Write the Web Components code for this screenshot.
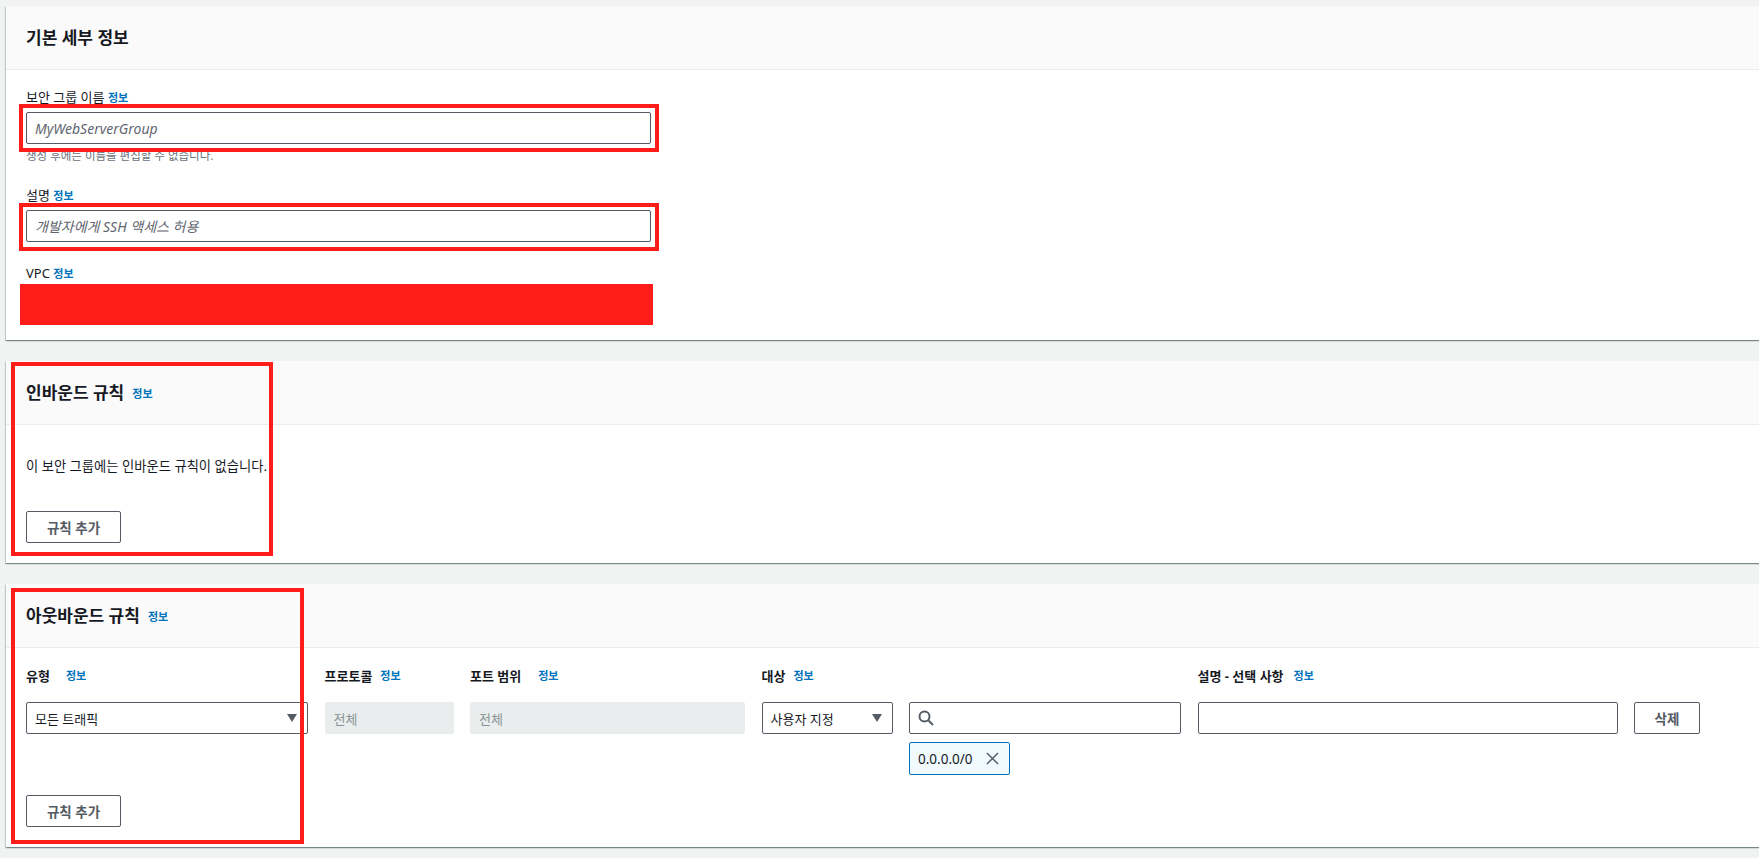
<!DOCTYPE html>
<html lang="ko">
<head>
<meta charset="utf-8">
<title>보안 그룹 생성</title>
<style>
  html, body { margin: 0; height: 100%; overflow: hidden; background: #f1f2f2; }
  body {
    padding: 6px 0 0 6px;
    box-sizing: border-box;
    font-family: "Noto Sans", "Noto Sans CJK KR", sans-serif;
    font-size: 14px;
    color: #16191f;
  }
</style>
</head>
<body>

<aws-panel heading="기본 세부 정보" style="height:334px">
  <div style="padding-top:18px">
    <form-field label="보안 그룹 이름" hint="생성 후에는 이름을 편집할 수 없습니다.">
      <text-input placeholder="MyWebServerGroup"></text-input>
    </form-field>
    <form-field label="설명" style="margin-top:23px">
      <text-input placeholder="개발자에게 SSH 액세스 허용"></text-input>
    </form-field>
    <form-field label="VPC" style="margin-top:22px"></form-field>
  </div>
  <red-mark style="left:13px;top:98px;width:640px;height:48px"></red-mark>
  <red-mark style="left:13px;top:197px;width:640px;height:48px"></red-mark>
  <red-mark solid style="left:14px;top:278px;width:633px;height:41px"></red-mark>
</aws-panel>

<aws-panel heading="인바운드 규칙" info style="height:202px;margin-top:21px">
  <p style="margin:31px 0 0;line-height:20px;font-size:13.3px">이 보안 그룹에는 인바운드 규칙이 없습니다.</p>
  <aws-button style="margin-top:35px;width:95px">규칙 추가</aws-button>
  <red-mark style="left:5px;top:1px;width:262px;height:194px"></red-mark>
</aws-panel>

<aws-panel heading="아웃바운드 규칙" info style="height:263px;margin-top:21px">
  <rule-row style="margin-top:17px"></rule-row>
  <aws-button style="position:absolute;left:20px;top:211px;width:95px">규칙 추가</aws-button>
  <red-mark style="left:5px;top:4px;width:293px;height:256px"></red-mark>
</aws-panel>

<script>
class InfoLink extends HTMLElement {
  constructor() {
    super();
    this.attachShadow({ mode: 'open' });
    this.shadowRoot.innerHTML = `
      <style>
        :host { display: inline-block; font-size: 11px; font-weight: 700; color: #0073bb; }
        :host([hidden]) { display: none; }
      </style>
      <slot>정보</slot>`;
  }
}

class AwsPanel extends HTMLElement {
  constructor() {
    super();
    this.attachShadow({ mode: 'open' });
    this.shadowRoot.innerHTML = `
      <style>
        :host {
          display: block;
          position: relative;
          width: 1800px;
          box-sizing: border-box;
          background: #fff;
          box-shadow: 0 1px 1px 0 rgba(0,28,36,.3), 1px 1px 1px 0 rgba(0,28,36,.15), -1px 1px 1px 0 rgba(0,28,36,.15);
        }
        header {
          height: 64px;
          box-sizing: border-box;
          padding-left: 20px;
          display: flex;
          align-items: center;
          gap: 8px;
          background: #fafafa;
          border-bottom: 1px solid #eaeded;
        }
        h2 { margin: 0; font-size: 17px; font-weight: 700; line-height: 22px; }
        .body { padding-left: 20px; }
      </style>
      <header><h2></h2><info-link hidden></info-link></header>
      <div class="body"><slot></slot></div>`;
  }
  connectedCallback() {
    this.shadowRoot.querySelector('h2').textContent = this.getAttribute('heading');
    this.shadowRoot.querySelector('info-link').hidden = !this.hasAttribute('info');
  }
}

class FormField extends HTMLElement {
  constructor() {
    super();
    this.attachShadow({ mode: 'open' });
    this.shadowRoot.innerHTML = `
      <style>
        :host { display: block; width: 625px; font-size: 13px; }
        .label { height: 18px; line-height: 18px; margin-bottom: 6px; }
        .hint { font-size: 11.5px; line-height: 14px; color: #687078; margin-top: 5px; }
      </style>
      <div class="label"><span id="l"></span> <info-link></info-link></div>
      <slot></slot>
      <div class="hint"></div>`;
  }
  connectedCallback() {
    this.shadowRoot.querySelector('#l').textContent = this.getAttribute('label');
    const hint = this.shadowRoot.querySelector('.hint');
    hint.textContent = this.getAttribute('hint') || '';
    hint.hidden = !this.hasAttribute('hint');
  }
}

class TextInput extends HTMLElement {
  constructor() {
    super();
    this.attachShadow({ mode: 'open' });
    this.shadowRoot.innerHTML = `
      <style>
        :host {
          display: flex;
          align-items: center;
          height: 32px;
          box-sizing: border-box;
          padding: 0 8px;
          background: #fff;
          border: 1px solid #545b64;
          border-radius: 2px;
          font-size: 13px;
          overflow: hidden;
        }
        :host([disabled]) { background: #eaeded; border-color: #eaeded; color: #879596; }
        .ph { font-style: italic; font-size: 14px; color: #5f6670; }
      </style>
      <slot name="icon"></slot><span class="ph"></span><slot></slot>`;
  }
  connectedCallback() {
    this.shadowRoot.querySelector('.ph').textContent = this.getAttribute('placeholder') || '';
  }
}

class SelectBox extends HTMLElement {
  constructor() {
    super();
    this.attachShadow({ mode: 'open' });
    this.shadowRoot.innerHTML = `
      <style>
        :host {
          display: flex;
          align-items: center;
          justify-content: space-between;
          height: 32px;
          box-sizing: border-box;
          padding: 0 10px 0 8px;
          background: #fff;
          border: 1px solid #545b64;
          border-radius: 2px;
          font-size: 13px;
        }
        svg { width: 10px; height: 8px; fill: #545b64; }
      </style>
      <slot></slot>
      <svg viewBox="0 0 10 8"><path d="M0 0h10L5 8z"/></svg>`;
  }
}

class AwsButton extends HTMLElement {
  constructor() {
    super();
    this.attachShadow({ mode: 'open' });
    this.shadowRoot.innerHTML = `
      <style>
        :host {
          display: flex;
          align-items: center;
          justify-content: center;
          height: 32px;
          box-sizing: border-box;
          background: #fff;
          border: 1px solid #545b64;
          border-radius: 2px;
          color: #545b64;
          font-size: 13.5px;
          font-weight: 700;
        }
      </style>
      <slot></slot>`;
  }
}

class TokenChip extends HTMLElement {
  constructor() {
    super();
    this.attachShadow({ mode: 'open' });
    this.shadowRoot.innerHTML = `
      <style>
        :host {
          display: inline-flex;
          align-items: center;
          gap: 13px;
          height: 33px;
          width: 101px;
          box-sizing: border-box;
          padding: 0 8px;
          background: #f1faff;
          border: 1px solid #0073bb;
          border-radius: 2px;
          font-size: 13.5px;
        }
        svg { width: 13px; height: 13px; flex: none; fill: none; stroke: #545b64; stroke-width: 1.5; }
      </style>
      <slot></slot>
      <svg viewBox="0 0 14 14"><path d="M1 1l12 12M13 1L1 13"/></svg>`;
  }
}

class RedMark extends HTMLElement {
  constructor() {
    super();
    this.attachShadow({ mode: 'open' });
    this.shadowRoot.innerHTML = `
      <style>
        :host {
          display: block;
          position: absolute;
          box-sizing: border-box;
          border: 4px solid #ff1d19;
          pointer-events: none;
        }
        :host([solid]) { background: #ff1d19; border: 0; }
      </style>`;
  }
}

class RuleRow extends HTMLElement {
  constructor() {
    super();
    this.attachShadow({ mode: 'open' });
    this.shadowRoot.innerHTML = `
      <style>
        :host {
          display: grid;
          grid-template-columns: 282px 129px 275px 131px 272px 420px 66px;
          column-gap: 16.5px;
          row-gap: 8px;
          font-size: 13px;
        }
        .head { height: 20px; font-weight: 700; display: flex; align-items: center; gap: 8px; margin-bottom: 9px; white-space: nowrap; }
        .first { gap: 16px; }
        .wide { gap: 17px; }
        .desc { gap: 10px; }
        .chip { grid-column: 5; }
        svg { width: 16px; height: 16px; flex: none; fill: none; stroke: #545b64; stroke-width: 2; }
      </style>
      <div class="head first">유형 <info-link></info-link></div>
      <div class="head">프로토콜 <info-link></info-link></div>
      <div class="head wide">포트 범위 <info-link></info-link></div>
      <div class="head">대상 <info-link></info-link></div>
      <div class="head"></div>
      <div class="head desc">설명 - 선택 사항 <info-link></info-link></div>
      <div class="head"></div>

      <select-box>모든 트래픽</select-box>
      <text-input disabled>전체</text-input>
      <text-input disabled>전체</text-input>
      <select-box>사용자 지정</select-box>
      <text-input><svg slot="icon" viewBox="0 0 16 16"><circle cx="6.5" cy="6.5" r="5"/><path d="M10.5 10.5L15 15"/></svg></text-input>
      <text-input></text-input>
      <aws-button>삭제</aws-button>
      <div class="chip"><token-chip>0.0.0.0/0</token-chip></div>`;
  }
}

customElements.define('info-link', InfoLink);
customElements.define('aws-panel', AwsPanel);
customElements.define('form-field', FormField);
customElements.define('text-input', TextInput);
customElements.define('select-box', SelectBox);
customElements.define('aws-button', AwsButton);
customElements.define('token-chip', TokenChip);
customElements.define('red-mark', RedMark);
customElements.define('rule-row', RuleRow);
</script>
</body>
</html>
